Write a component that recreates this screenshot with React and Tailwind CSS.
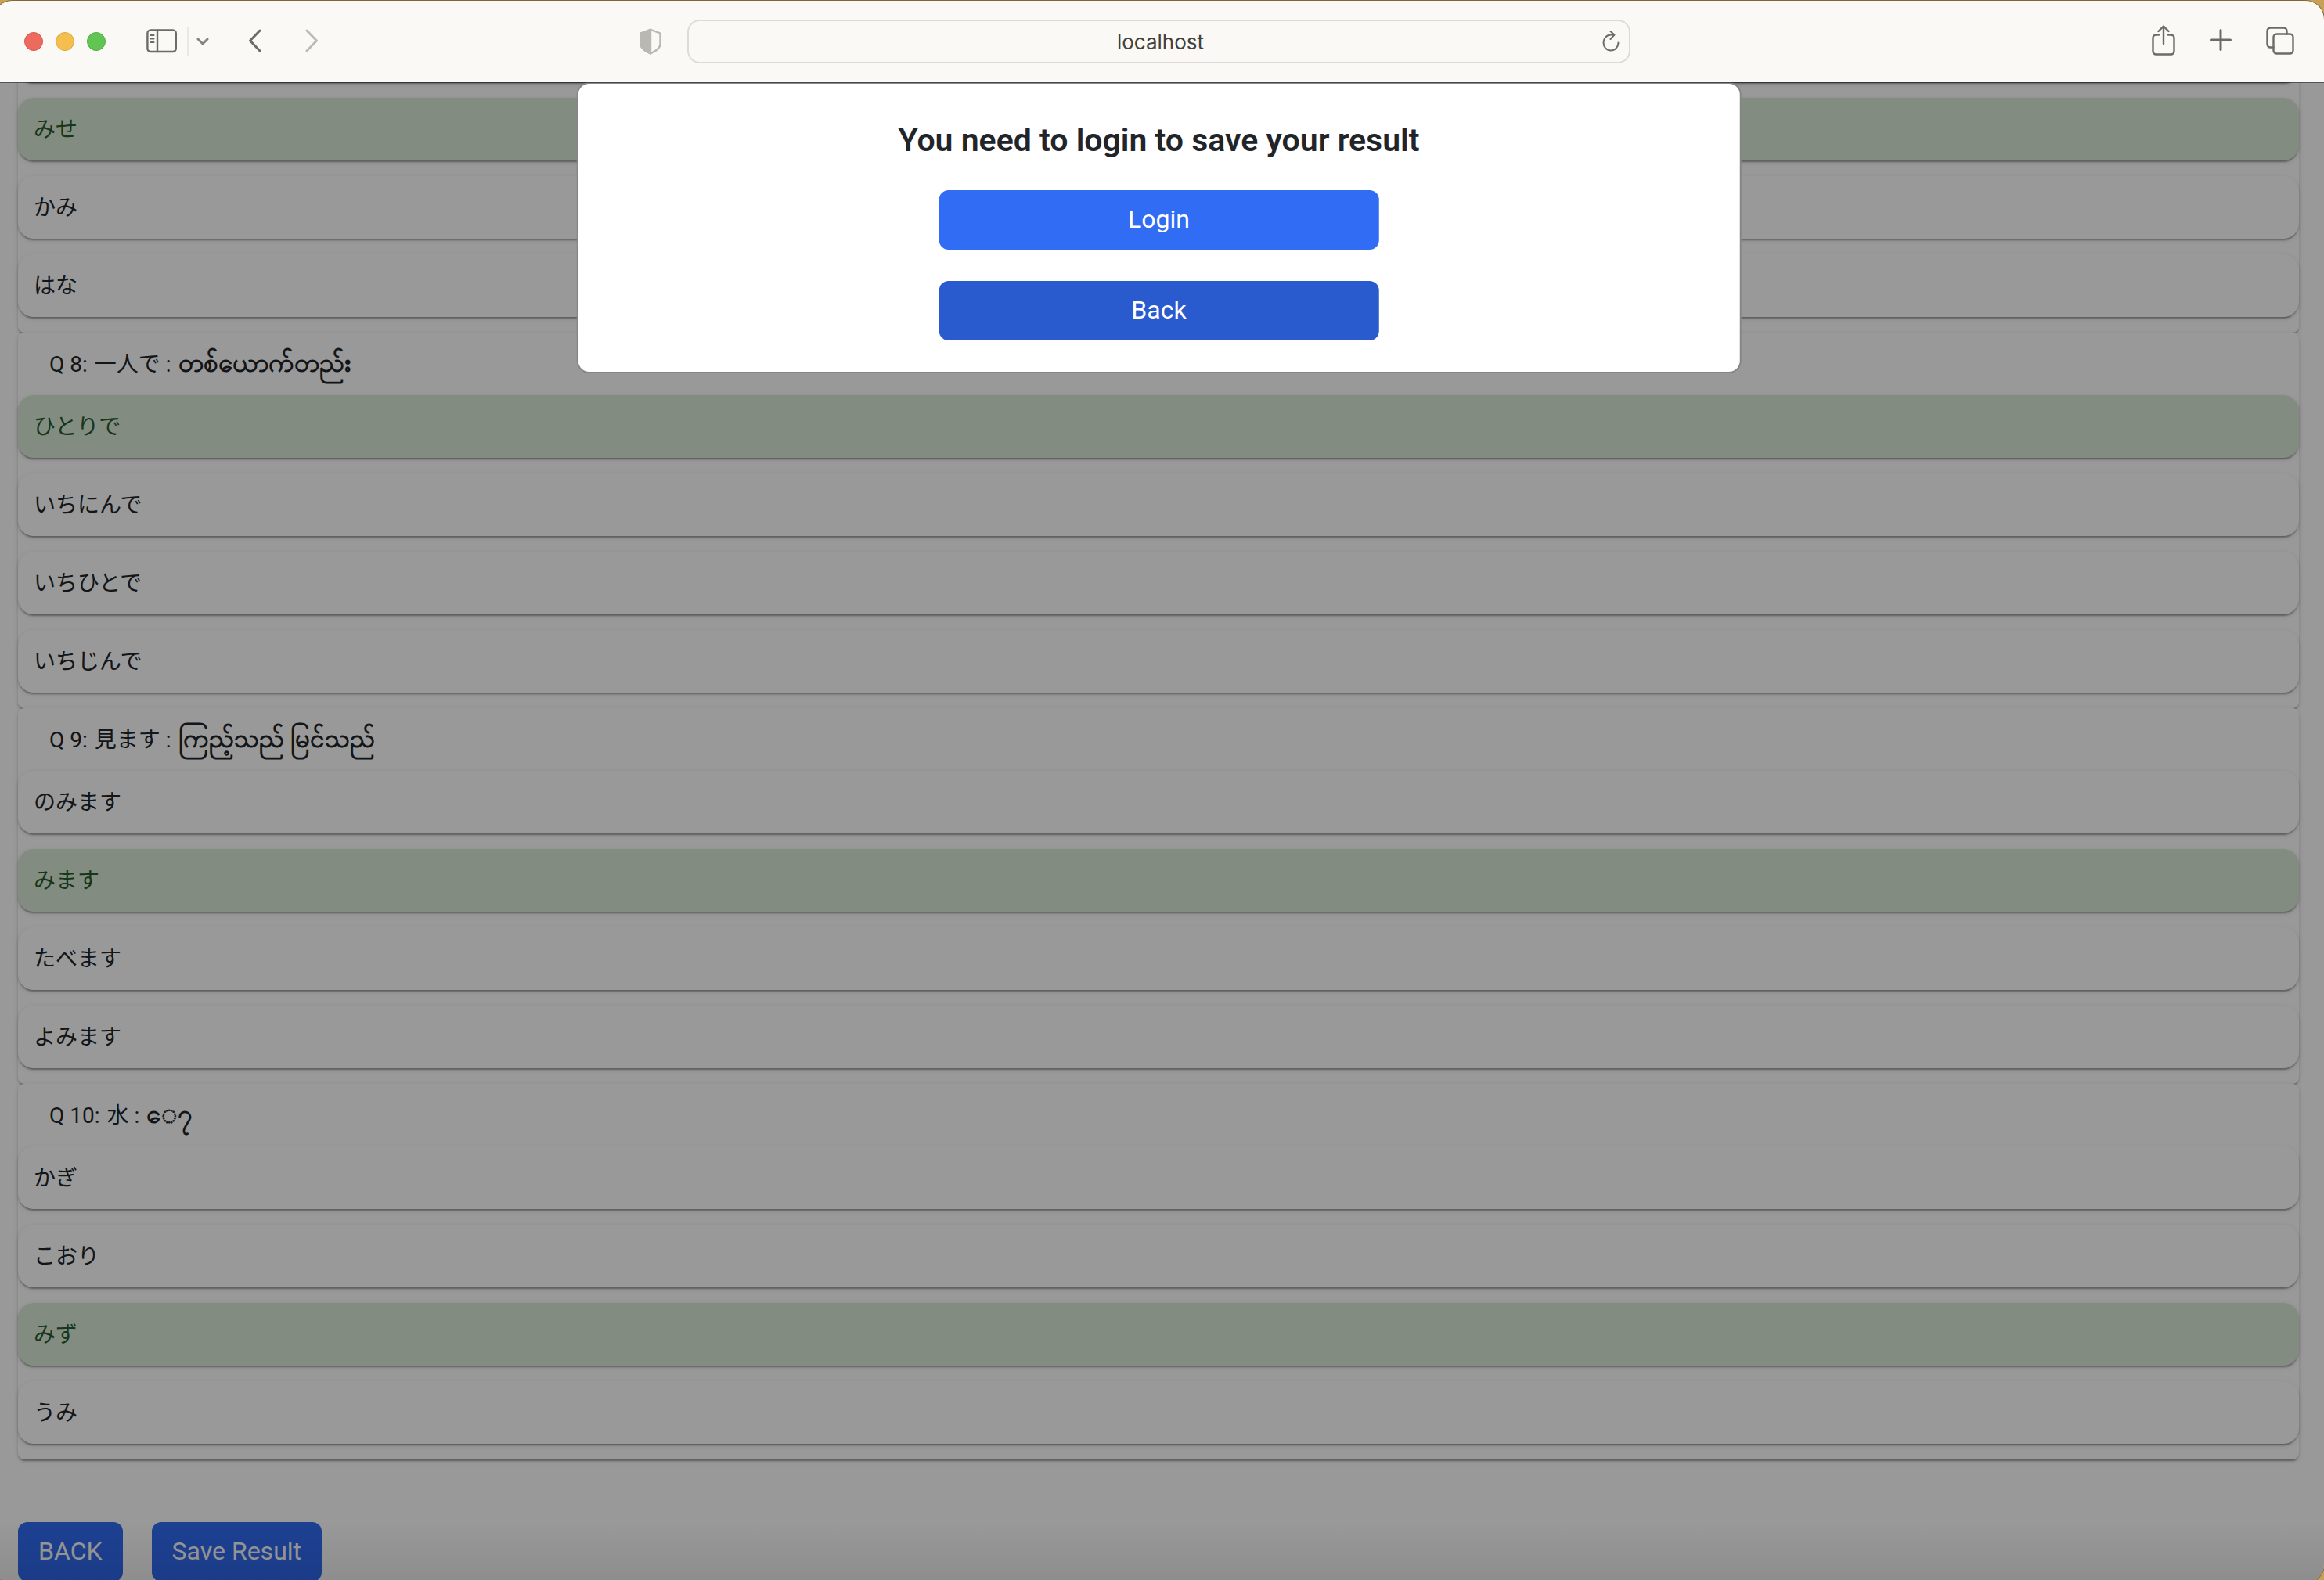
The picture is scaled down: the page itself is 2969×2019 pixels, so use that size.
const FONT = "font-[Roboto,'Noto_Sans_CJK_JP','Noto_Sans',sans-serif]";

const PAPER =
  "shadow-[0_4px_2px_-2px_rgba(0,0,0,0.2),0_2px_2px_0_rgba(0,0,0,0.14),0_2px_6px_0_rgba(0,0,0,0.12)]";

const questions = [
  { options: ["みせ", "かみ", "はな"], correct: 0 },
  {
    number: 8,
    word: "一人で",
    meaning: "တစ်ယောက်တည်း",
    options: ["ひとりで", "いちにんで", "いちひとで", "いちじんで"],
    correct: 0,
  },
  {
    number: 9,
    word: "見ます",
    meaning: "ကြည့်သည် မြင်သည်",
    options: ["のみます", "みます", "たべます", "よみます"],
    correct: 1,
  },
  {
    number: 10,
    word: "水",
    meaning: "ေ၇",
    options: ["かぎ", "こおり", "みず", "うみ"],
    correct: 2,
  },
];

function Icon({ w, h, sw = 2.4, children }) {
  return (
    <svg
      width={w}
      height={h}
      viewBox={`0 0 ${w} ${h}`}
      fill="none"
      stroke="currentColor"
      strokeWidth={sw}
      strokeLinecap="round"
      strokeLinejoin="round"
      aria-hidden="true"
    >
      {children}
    </svg>
  );
}

function TitleBar() {
  return (
    <header className="relative z-20 grid h-[104px] grid-cols-[1fr_40.5%_1fr] items-center bg-[#faf9f5] text-[#6d6b67] shadow-[0_1px_0_rgba(0,0,0,0.45)]">
      <div className="flex items-center pl-[39px]">
        <div className="flex gap-4">
          <button aria-label="Close" className="size-6 rounded-full border border-[#d9574d] bg-[#ec6a5e]" />
          <button aria-label="Minimize" className="size-6 rounded-full border border-[#dba73f] bg-[#f4bf4f]" />
          <button aria-label="Zoom" className="size-6 rounded-full border border-[#52ad43] bg-[#61c554]" />
        </div>
        <button aria-label="Sidebar" className="ml-[52px]">
          <Icon w={40} h={32}>
            <rect x="1.4" y="1.4" width="36.4" height="27.6" rx="4" />
            <path d="M14 1.4v27.6" />
            <path d="M5.600 8h4M5.600 12.500h4M5.600 17h4" strokeWidth="1.8" />
          </Icon>
        </button>
        <span className="ml-3 h-9 w-0.5 bg-[#e9e8e4]" />
        <button aria-label="Tab groups" className="ml-[10px] text-[#85837f]">
          <Icon w={16} h={12} sw={3}>
            <path d="M2 3l6 6 6-6" />
          </Icon>
        </button>
        <button aria-label="Go back" className="ml-[50px]">
          <Icon w={18} h={32} sw={3}>
            <path d="M15 2L2.500 15L15 28" />
          </Icon>
        </button>
        <button aria-label="Go forward" className="ml-[54px] text-[#bcbbb7]">
          <Icon w={18} h={32} sw={3}>
            <path d="M3 2L15.500 15L3 28" />
          </Icon>
        </button>
        <button aria-label="Privacy report" className="mr-[33px] ml-auto text-[#b9b8b3]">
          <Icon w={28} h={34} sw={2.4}>
            <path d="M14 1.800L26.500 6.500V20C26.500 26 20 29.500 14 32.500C8 29.500 1.500 26 1.500 20V6.500Z" />
            <path d="M14 1.800V32.500C8 29.500 1.500 26 1.500 20V6.500Z" fill="currentColor" />
          </Icon>
        </button>
      </div>
      <div className="flex h-14 items-center rounded-2xl border-2 border-[#dcdbd7] pr-3 pl-[38px]">
        <input
          aria-label="Address"
          defaultValue="localhost"
          className="min-w-0 flex-1 bg-transparent text-center font-[Inter,sans-serif] text-[26px] text-[#42413e] outline-none"
        />
        <button aria-label="Reload">
          <Icon w={22} h={28} sw={2}>
            <path d="M20.500 15.500A9.500 10 0 1 1 11 5.500H15" />
            <path d="M10.500 1L15.500 5.500L10.500 11" />
          </Icon>
        </button>
      </div>
      <div className="flex items-center justify-end pr-[38px]">
        <button aria-label="Share">
          <Icon w={30} h={42}>
            <path d="M9 12.500H5.500a4 4 0 0 0-4 4v17a4 4 0 0 0 4 4h19a4 4 0 0 0 4-4V16.500a4 4 0 0 0-4-4H21" />
            <path d="M15 24V2M8.500 8L15 1.500L21.500 8" />
          </Icon>
        </button>
        <button aria-label="New tab" className="ml-11">
          <Icon w={28} h={32} sw={3}>
            <path d="M14 1.500v25M1.500 14h25" />
          </Icon>
        </button>
        <button aria-label="Show tabs" className="ml-11">
          <Icon w={36} h={38}>
            <rect x="9.500" y="9.500" width="25" height="25" rx="4" />
            <path d="M9.500 26.500H5.500a4 4 0 0 1-4-4V5.500a4 4 0 0 1 4-4h17a4 4 0 0 1 4 4v4" />
          </Icon>
        </button>
      </div>
    </header>
  );
}

function Question({ number, word, meaning, options, correct }) {
  return (
    <section className={`rounded-lg bg-white pb-5 ${PAPER}`}>
      {number ? (
        <h2 className="flex h-20 items-baseline gap-[9px] px-10 text-[28px] leading-[78px]">
          <span>Q {number}:</span>
          <span>{word} :</span>
          <span className="text-[33px] leading-[78px] font-bold">{meaning}</span>
        </h2>
      ) : (
        <div className={`-mt-5 mb-5 h-5 rounded-b-[20px] bg-white ${PAPER}`} />
      )}
      <ul className="flex flex-col gap-5">
        {options.map((option, i) => (
          <li
            key={option}
            className={`flex h-20 items-center rounded-[20px] px-5 pt-0.5 text-[28px] ${PAPER} ${
              i === correct ? "bg-[#dae9d8] text-[#285a2a]" : "bg-white"
            }`}
          >
            {option}
          </li>
        ))}
      </ul>
    </section>
  );
}

function LoginDialog() {
  return (
    <div
      role="dialog"
      aria-labelledby="dialog-title"
      className="absolute top-0 left-1/2 z-10 flex w-1/2 -translate-x-1/2 flex-col items-center rounded-2xl border-2 border-[#868686] bg-white p-10"
    >
      <h1 id="dialog-title" className="text-[41px] leading-[64px] font-semibold text-[#212529]">
        You need to login to save your result
      </h1>
      <button className="mt-8 h-[76px] w-2/5 rounded-xl bg-[#316cf4] pb-0.5 text-[32px] text-white">Login</button>
      <button className="mt-10 h-[76px] w-2/5 rounded-xl bg-[#295bcf] pb-0.5 text-[32px] text-white">Back</button>
    </div>
  );
}

export default function App() {
  return (
    <div className={`h-screen overflow-hidden bg-[#c79f55] pt-px ${FONT}`}>
      <div className="-ml-2 overflow-hidden rounded-[24px] shadow-[0_0_0_1px_rgba(0,0,0,0.35)]">
        <TitleBar />
        <div className="relative overflow-hidden bg-white">
          <main className="pr-8 pb-0.5 pl-[31px] text-[#212529]">
            {questions.map((q) => (
              <Question key={q.options[0]} {...q} />
            ))}
            <div className="mt-20 flex gap-[37px]">
              <button className="h-[76px] rounded-xl bg-[#316cf4] px-[26px] pb-0.5 text-[32px] text-white">BACK</button>
              <button className="h-[76px] rounded-xl bg-[#316cf4] px-[26px] pb-0.5 text-[32px] text-white">
                Save Result
              </button>
            </div>
          </main>
          <div className="absolute inset-0 bg-black/40" />
          <div className="absolute inset-x-0 bottom-0 h-20 bg-linear-to-b from-transparent to-black/8" />
          <LoginDialog />
        </div>
      </div>
    </div>
  );
}
